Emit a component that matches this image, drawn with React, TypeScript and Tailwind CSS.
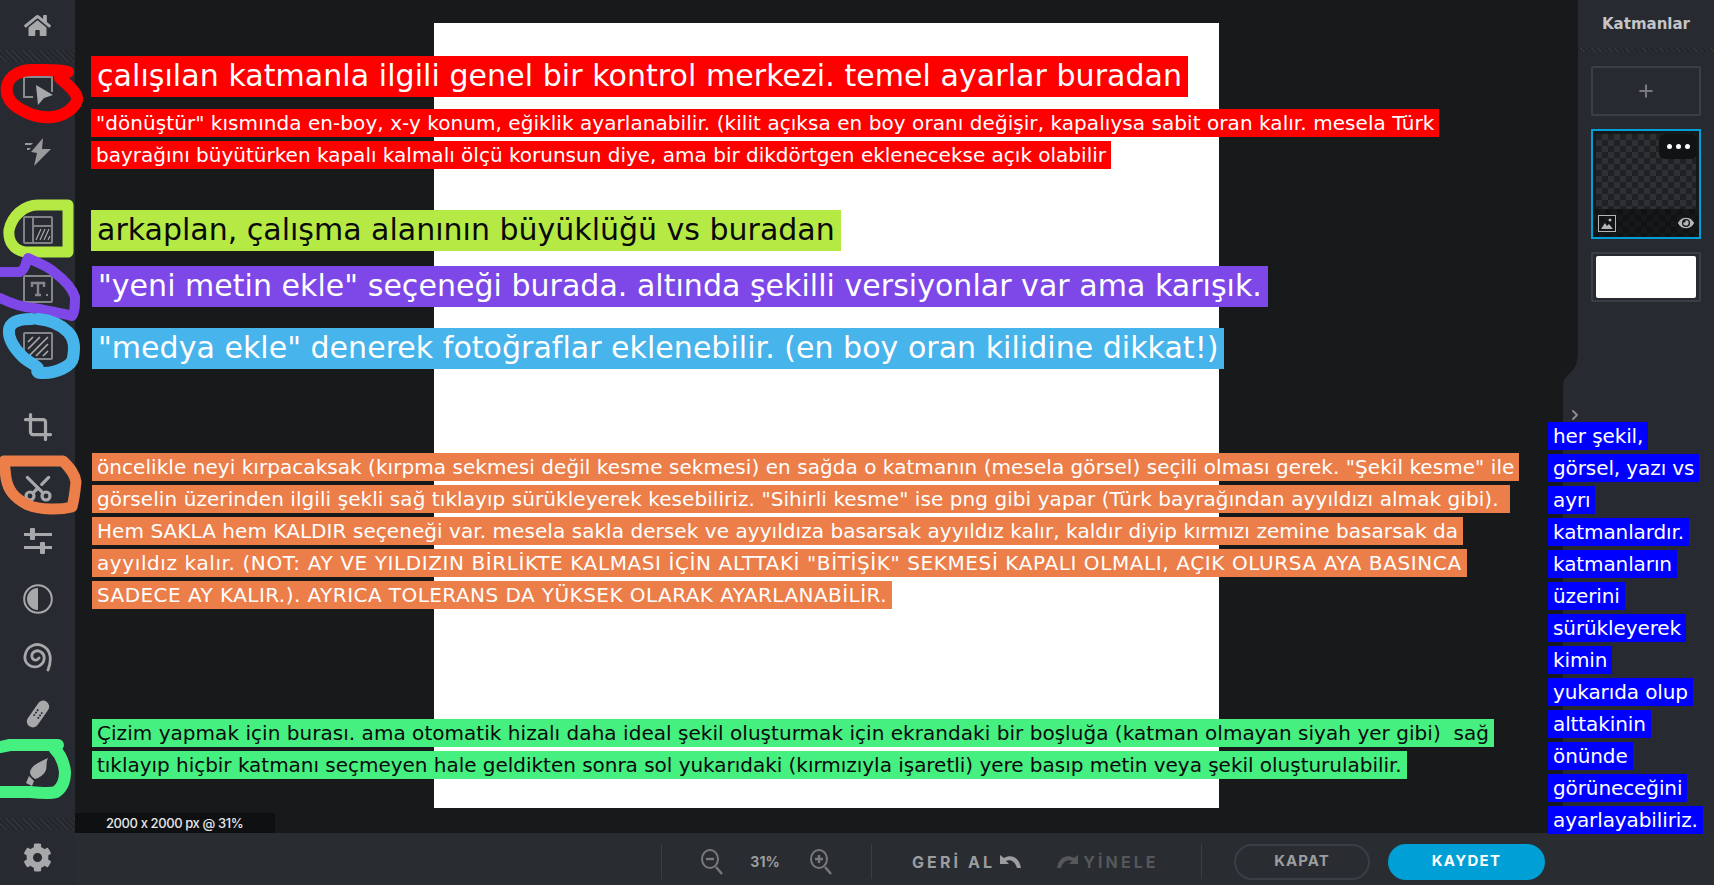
import { Crop, Plus, ChevronRight, Scissors } from "lucide-react";
import { FaCog, FaEye, FaHome } from "react-icons/fa";

type NoteLine = { text: string; fit: string };

const redLines: NoteLine[] = [
  {
    text: '"dönüştür" kısmında en-boy, x-y konum, eğiklik ayarlanabilir. (kilit açıksa en boy oranı değişir, kapalıysa sabit oran kalır. mesela Türk',
    fit: "tracking-[0.06px]",
  },
  { text: "bayrağını büyütürken kapalı kalmalı ölçü korunsun diye, ama bir dikdörtgen eklenecekse açık olabilir", fit: "" },
];

const orangeLines: NoteLine[] = [
  {
    text: 'öncelikle neyi kırpacaksak (kırpma sekmesi değil kesme sekmesi) en sağda o katmanın (mesela görsel) seçili olması gerek. "Şekil kesme" ile',
    fit: "tracking-[0.055px]",
  },
  {
    text: 'görselin üzerinden ilgili şekli sağ tıklayıp sürükleyerek kesebiliriz. "Sihirli kesme" ise png gibi yapar (Türk bayrağından ayyıldızı almak gibi).\u00a0',
    fit: "tracking-[0.07px]",
  },
  {
    text: "Hem SAKLA hem KALDIR seçeneği var. mesela sakla dersek ve ayyıldıza basarsak ayyıldız kalır, kaldır diyip kırmızı zemine basarsak da",
    fit: "tracking-[0.06px]",
  },
  {
    text: 'ayyıldız kalır. (NOT: AY VE YILDIZIN BİRLİKTE KALMASI İÇİN ALTTAKİ "BİTİŞİK" SEKMESİ KAPALI OLMALI, AÇIK OLURSA AYA BASINCA',
    fit: "tracking-[0.6px]",
  },
  { text: "SADECE AY KALIR.). AYRICA TOLERANS DA YÜKSEK OLARAK AYARLANABİLİR.", fit: "tracking-[0.45px]" },
];

const greenLines: NoteLine[] = [
  {
    text: "Çizim yapmak için burası. ama otomatik hizalı daha ideal şekil oluşturmak için ekrandaki bir boşluğa (katman olmayan siyah yer gibi)\u00a0 sağ",
    fit: "tracking-[0.04px]",
  },
  {
    text: "tıklayıp hiçbir katmanı seçmeyen hale geldikten sonra sol yukarıdaki (kırmızıyla işaretli) yere basıp metin veya şekil oluşturulabilir.",
    fit: "tracking-[-0.025px]",
  },
];

const blueLines = [
  "her şekil,",
  "görsel, yazı vs",
  "ayrı",
  "katmanlardır.",
  "katmanların",
  "üzerini",
  "sürükleyerek",
  "kimin",
  "yukarıda olup",
  "alttakinin",
  "önünde",
  "görüneceğini",
  "ayarlayabiliriz.",
];

function SelectIcon() {
  return (
    <svg width="32" height="30" viewBox="0 0 32 30" fill="none" className="text-[#8b8c8e]">
      <path d="M11 21H2V1h28v15" stroke="currentColor" strokeWidth="2" />
      <path d="M14 9 L31 19 L22 22 L16 29 Z" fill="#a7a8aa" />
    </svg>
  );
}

function BoltIcon() {
  return (
    <svg width="28" height="30" viewBox="0 0 28 30" fill="currentColor" className="text-[#98999b]">
      <path d="M19 1 L7 15 L13 16 L10 29 L27 12 L18 12 Z" />
      <path d="M1 6h8l-2 2H1zM3 11h4l-2 2H3z" />
    </svg>
  );
}

function LayoutIcon() {
  return (
    <svg width="30" height="28" viewBox="0 0 30 28" fill="none" className="text-[#818285]">
      <rect x="1" y="1" width="28" height="26" rx="1" stroke="currentColor" strokeWidth="2" />
      <path d="M10 1v26M10 10h19" stroke="currentColor" strokeWidth="2" />
      <path d="M13 24 L18 13 M17 24 L22 13 M21 24 L26 13 M25 24 L27 20" stroke="#a7a8aa" strokeWidth="1.2" />
    </svg>
  );
}

function TextIcon() {
  return (
    <svg width="30" height="28" viewBox="0 0 30 28" fill="none" className="text-[#85868a]">
      <rect x="1" y="1" width="28" height="26" rx="1" stroke="currentColor" strokeWidth="2" />
      <path d="M9 12V8h12v4M15 8v12M12 20h6" stroke="currentColor" strokeWidth="2.4" />
      <rect x="23" y="19" width="2" height="2" fill="currentColor" />
    </svg>
  );
}

function MediaIcon() {
  return (
    <svg width="30" height="28" viewBox="0 0 30 28" fill="none" className="text-[#85868a]">
      <rect x="1" y="1" width="28" height="26" rx="1" stroke="currentColor" strokeWidth="2" />
      <path d="M5 10 L10 5 M5 17 L17 5 M6 24 L25 5 M13 24 L25 12 M20 24 L25 19" stroke="#a7a8aa" strokeWidth="1.7" />
    </svg>
  );
}

function SlidersIcon() {
  return (
    <svg width="28" height="26" viewBox="0 0 28 26" fill="currentColor">
      <rect x="0" y="5" width="28" height="3" />
      <rect x="6" y="0" width="5" height="12" rx="1" />
      <rect x="0" y="18" width="28" height="3" />
      <rect x="16" y="14" width="5" height="12" rx="1" />
    </svg>
  );
}

function ContrastIcon() {
  return (
    <svg width="30" height="30" viewBox="0 0 30 30" fill="none">
      <circle cx="15" cy="15" r="13.8" stroke="currentColor" strokeWidth="2" />
      <path d="M15 4a11 11 0 0 0 0 22z" fill="currentColor" />
    </svg>
  );
}

function SpiralIcon() {
  return (
    <svg width="30" height="30" viewBox="0 0 30 30" fill="none">
      <path
        d="M25 27 C29 17 28 7 20 3 C12 -1 3 4 2 13 C1 21 9 26 16 23 C22 20 23 12 18 9 C14 6 8 9 9 14 C10 18 14 18 16 15"
        stroke="currentColor"
        strokeWidth="2.8"
        strokeLinecap="round"
      />
    </svg>
  );
}

function BandageIcon() {
  return (
    <svg width="24" height="30" viewBox="0 0 24 30">
      <rect x="6" y="0" width="12" height="30" rx="6" fill="currentColor" transform="rotate(35 12 15)" />
      <g fill="#272a30" transform="rotate(35 12 15)">
        <circle cx="9.5" cy="12" r="1" />
        <circle cx="14.5" cy="12" r="1" />
        <circle cx="9.5" cy="15" r="1" />
        <circle cx="14.5" cy="15" r="1" />
        <circle cx="9.5" cy="18" r="1" />
        <circle cx="14.5" cy="18" r="1" />
      </g>
    </svg>
  );
}

function BrushIcon() {
  return (
    <svg width="24" height="28" viewBox="0 0 24 28" fill="currentColor">
      <path d="M22 0 C20 4 21 8 20 12 C18 17 13 20 9 21 C6 19 4 17 4 14 C5 8 13 4 22 0Z" />
      <path d="M3 18 L8 23 L6 28 L0 25 Z" />
    </svg>
  );
}

function UndoIcon({ flip }: { flip?: boolean }) {
  return (
    <svg width="22" height="15" viewBox="0 0 22 15" fill="currentColor" className={flip ? "-scale-x-100" : ""}>
      <path d="M0 1v9h9L6 7c2-1 8-2 11 7h4C19 2 10 0 4 4z" />
    </svg>
  );
}

function ZoomIcon({ plus }: { plus?: boolean }) {
  return (
    <svg width="22" height="26" viewBox="0 0 22 26" fill="none" className="text-[#77797c]">
      <ellipse cx="9" cy="10" rx="8" ry="9" stroke="currentColor" strokeWidth="2" />
      <path d="M15 18l6 7" stroke="currentColor" strokeWidth="2.4" />
      <path d={plus ? "M5 10h8M9 6v8" : "M5 10h8"} stroke="currentColor" strokeWidth="2.4" />
    </svg>
  );
}

function Hatch() {
  return (
    <div className="h-[12px] w-full bg-[repeating-linear-gradient(45deg,#33363b_0px,#33363b_1px,#24272c_1px,#24272c_4px)]" />
  );
}

function Sidebar() {
  const slot = "h-[58px] flex items-center justify-center";
  return (
    <div className="w-[75px] h-full shrink-0 bg-[#272a30] flex flex-col text-[#a7a8aa]">
      <div className="h-[50px] flex items-center justify-center">
        <FaHome className="w-[27px] h-[27px]" />
      </div>
      <Hatch />
      <div className={slot}><SelectIcon /></div>
      <div className={`${slot} mt-[3px]`}><BoltIcon /></div>
      <div className={`${slot} mt-[20px]`}><LayoutIcon /></div>
      <div className={`${slot} mt-[1px]`}><TextIcon /></div>
      <div className={`${slot} -mt-[1px]`}><MediaIcon /></div>
      <div className={`${slot} mt-[23px]`}><Crop className="w-[30px] h-[30px]" strokeWidth={2.6} /></div>
      <div className={`${slot} mt-[3px]`}><Scissors className="w-[32px] h-[32px] -rotate-90" strokeWidth={2.4} /></div>
      <div className={`${slot} -mt-[5px]`}><SlidersIcon /></div>
      <div className={slot}><ContrastIcon /></div>
      <div className={`${slot} mt-[1px]`}><SpiralIcon /></div>
      <div className={`${slot} -mt-[2px]`}><BandageIcon /></div>
      <div className={slot}><BrushIcon /></div>
      <div className="mt-auto">
        <Hatch />
        <div className="h-[55px] flex items-center justify-center">
          <FaCog className="w-[29px] h-[29px]" />
        </div>
      </div>
    </div>
  );
}

function LayersPanel() {
  return (
    <div className="relative w-[136px] shrink-0 bg-[#272a30] flex flex-col">
      <div className="h-[48px] flex items-center justify-center text-[#c4c5c7] text-[15px] font-bold font-['DejaVu_Sans',sans-serif]">
        Katmanlar
      </div>
      <div className="h-[4px] bg-[repeating-linear-gradient(45deg,#33363b_0px,#33363b_1px,#24272c_1px,#24272c_4px)]" />
      <div className="px-[13px] pt-[14px] flex flex-col gap-[13px]">
        <div className="h-[50px] border-2 border-[#3b3e44] rounded-[2px] flex items-center justify-center">
          <Plus className="w-[20px] h-[20px] text-[#77797c]" strokeWidth={2.5} />
        </div>
        <div className="relative h-[110px] border-2 border-[#009fd6] bg-[#17181a] p-[3px] pb-0">
          <div className="h-[75px] bg-[conic-gradient(#2e3034_25%,#1f2023_0_50%,#2e3034_0_75%,#1f2023_0)] bg-[length:12px_12px]" />
          <div className="absolute left-0 right-0 bottom-0 h-[28px] bg-[conic-gradient(#17181a_25%,#111214_0_50%,#17181a_0_75%,#111214_0)] bg-[length:12px_12px] flex items-center justify-between px-[5px] text-[#b4b5b7]">
            <svg width="18" height="17" viewBox="0 0 18 17" fill="none">
              <rect x="0.5" y="0.5" width="17" height="16" stroke="currentColor" />
              <path d="M3 14l4-6 2 3 2-2 4 5z" fill="currentColor" />
              <circle cx="12" cy="5" r="1.5" fill="currentColor" />
            </svg>
            <FaEye className="w-[16px] h-[16px]" />
          </div>
          <div className="absolute top-[3px] right-[2px] w-[38px] h-[25px] bg-[#111214] rounded-[6px] flex items-center justify-center gap-[4px]">
            <span className="w-[5px] h-[5px] rounded-full bg-white" />
            <span className="w-[5px] h-[5px] rounded-full bg-white" />
            <span className="w-[5px] h-[5px] rounded-full bg-white" />
          </div>
        </div>
        <div className="h-[50px] border-2 border-[#3b3e44] rounded-[2px] px-[3px] py-[2px]">
          <div className="h-full bg-white rounded-[2px]" />
        </div>
      </div>
      {/* notch at the left edge of the panel */}
      <svg className="absolute left-[-15px] top-[350px]" width="15" height="483" viewBox="0 0 15 483" fill="#272a30">
        <path d="M15 0 C15 14 12 18 6 24 C2 28 0 30 0 38 V483 H15 Z" />
      </svg>
      <ChevronRight className="absolute left-[-11px] top-[407px] w-[16px] h-[16px] text-[#8a8b8e]" strokeWidth={3} />
    </div>
  );
}

function BottomBar() {
  return (
    <div className="h-[52px] pt-[5px] bg-[#292c31] flex items-center font-['Inter',sans-serif] font-bold text-[#9c9d9f] text-[14px]">
      <div className="w-px h-[35px] bg-[#3b3e44] ml-[586px]" />
      <div className="w-[209px] flex items-center pl-[39px]">
        <ZoomIcon />
        <span className="ml-[26px] w-[32px] text-center">31%</span>
        <div className="ml-[29px]"><ZoomIcon plus /></div>
      </div>
      <div className="w-px h-[35px] bg-[#3b3e44]" />
      <div className="w-[329px] flex items-center pl-[40px] text-[16px] tracking-[3.1px]">
        <span>GERİ AL</span>
        <div className="ml-[5px]"><UndoIcon /></div>
        <div className="ml-[34px] text-[#55575b]"><UndoIcon flip /></div>
        <span className="ml-[5px] text-[#55575b]">YİNELE</span>
      </div>
      <div className="w-px h-[35px] bg-[#3b3e44]" />
      <button className="ml-[32px] w-[136px] h-[36px] rounded-full border-2 border-[#3b3e44] text-[#9c9d9f] text-[15px] tracking-[1px]">
        KAPAT
      </button>
      <button className="ml-[18px] w-[157px] h-[36px] rounded-full bg-[#009fd6] text-white text-[15px] tracking-[1.3px]">
        KAYDET
      </button>
    </div>
  );
}

function Notes() {
  const note = "w-fit whitespace-nowrap";
  const small = `${note} h-[28px] leading-[28px] text-[20px] px-[5px]`;
  const large = `${note} h-[41px] leading-[39px] text-[30px] px-[6px]`;
  return (
    <div className="font-['DejaVu_Sans',sans-serif]">
      <div className={`absolute left-[91px] top-[56px] bg-[#ff0000] text-white tracking-[0.06px] ${large}`}>
        çalışılan katmanla ilgili genel bir kontrol merkezi. temel ayarlar buradan
      </div>
      <div className="absolute left-[91px] top-[109px] flex flex-col gap-[4px]">
        {redLines.map((l) => (
          <div key={l.text} className={`bg-[#ff0000] text-white ${small} ${l.fit}`}>{l.text}</div>
        ))}
      </div>
      <div className={`absolute left-[91px] top-[210px] bg-[#b5ea45] text-[#0a0a0a] ${large}`}>
        arkaplan, çalışma alanının büyüklüğü vs buradan
      </div>
      <div className={`absolute left-[92px] top-[266px] bg-[#7e47e8] text-white tracking-[0.03px] ${large}`}>
        "yeni metin ekle" seçeneği burada. altında şekilli versiyonlar var ama karışık.
      </div>
      <div className={`absolute left-[92px] top-[328px] bg-[#47b4ec] text-white tracking-[0.03px] ${large}`}>
        "medya ekle" denerek fotoğraflar eklenebilir. (en boy oran kilidine dikkat!)
      </div>
      <div className="absolute left-[92px] top-[453px] flex flex-col gap-[4px]">
        {orangeLines.map((l) => (
          <div key={l.text} className={`bg-[#ec7e4a] text-white ${small} ${l.fit}`}>{l.text}</div>
        ))}
      </div>
      <div className="absolute left-[92px] top-[719px] flex flex-col gap-[4px]">
        {greenLines.map((l) => (
          <div key={l.text} className={`bg-[#45ef80] text-[#0a0a0a] ${small} ${l.fit}`}>{l.text}</div>
        ))}
      </div>
      <div className="absolute left-[1548px] top-[422px] flex flex-col gap-[4px]">
        {blueLines.map((t) => (
          <div key={t} className={`bg-[#0000ff] text-white tracking-[-0.1px] ${small}`}>{t}</div>
        ))}
      </div>
    </div>
  );
}

function Scribbles() {
  return (
    <svg className="absolute left-0 top-0 pointer-events-none" width="90" height="810" viewBox="0 0 90 810" fill="none" strokeLinecap="round" strokeLinejoin="round">
      <path d="M68 72 C58 69 45 70 32 70 C20 70 9 76 7 86 C5 97 12 105 22 110 C32 116 42 118 52 117 C64 116 75 108 77 100 C78 93 68 85 60 78" stroke="#ff0000" strokeWidth="12" />
      <path d="M68 205 H38 C24 205 12 216 9 230 C8 242 14 250 25 252 H68 Z" stroke="#b5ea45" strokeWidth="11" />
      <path d="M0 272 H20 C26 270 26 260 28 258 C36 262 48 266 54 272 C62 278 72 288 75 297 C75 305 75 312 72 316 C66 314 50 311 33 308 C20 307 8 302 0 298" stroke="#7e47e8" strokeWidth="10" />
      <path d="M32 319 C20 319 10 321 9 330 C8 340 16 350 22 356 C28 362 36 365 38 368 C36 373 38 373 44 373 C56 373 72 366 73 358 C75 348 74 338 68 332 C60 324 50 320 38 319" stroke="#47b4ec" strokeWidth="12" />
      <path d="M4 461 H63 C70 468 75 474 76 482 C75 492 74 500 72 507 C60 510 40 510 28 505 C14 498 8 490 6 478 Z" stroke="#ec7e4a" strokeWidth="11" />
      <path d="M58 745 H10 L0 747 M0 792 L30 792 C40 793 50 794 56 792 C62 788 65 782 65 772 C64 762 60 754 54 748" stroke="#45ef80" strokeWidth="12" />
    </svg>
  );
}

export default function App() {
  return (
    <div className="relative w-[1714px] h-[885px] overflow-hidden flex bg-[#18191b]">
      <Sidebar />
      <div className="flex-1 flex flex-col min-w-0">
        <div className="flex-1 flex min-h-0">
          <div className="relative flex-1 flex items-center justify-center min-w-0">
            <div className="w-[785px] h-[785px] bg-white -mt-[2px]" />
            <div className="absolute left-0 bottom-0 w-[200px] h-[20px] bg-[#0f1011] pl-[31px] text-[13px] leading-[20px] text-[#e6e6e6] font-medium font-['Inter',sans-serif] tracking-[-0.4px]">
              2000 x 2000 px @ 31%
            </div>
          </div>
          <LayersPanel />
        </div>
        <BottomBar />
      </div>
      <Scribbles />
      <Notes />
    </div>
  );
}
